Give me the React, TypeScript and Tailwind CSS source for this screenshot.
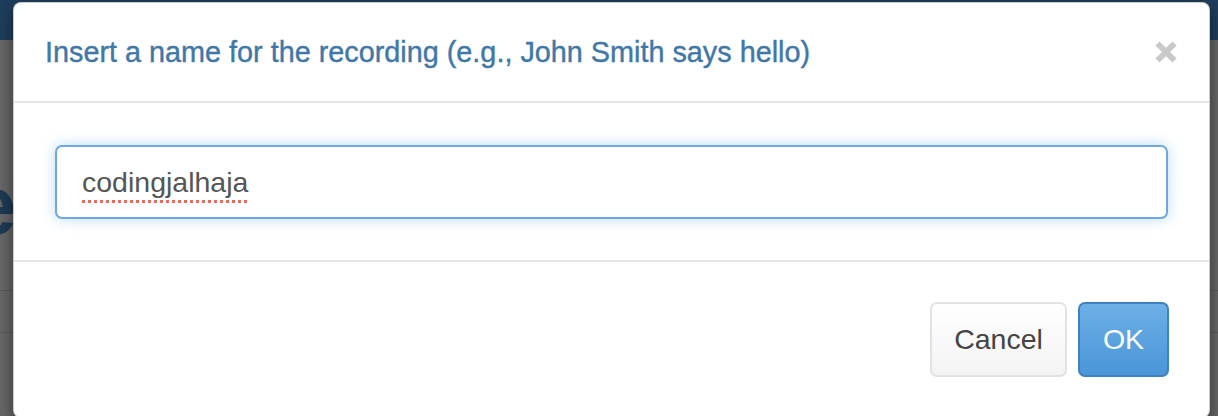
import React from "react";
import { X } from "lucide-react";

const App = () => {
  return (
    <div className="relative h-[416px] w-[1218px] overflow-hidden bg-[#666666] font-['Liberation_Sans',Arial,sans-serif]">
      {/* dimmed page behind the modal */}
      <div className="h-[40px] bg-[#1f3e5c]" />
      <div className="pt-[123px]">
        <h1 className="-ml-[30px] text-[84px] font-bold leading-[84px] text-[#1d3a56]">e</h1>
      </div>
      <div className="h-[44px] border-b border-[#595959]" />
      <div className="h-[42px] border-b border-[#595959]" />

      <div className="absolute left-[13px] top-[2px] w-[1197px] rounded-[8px] border border-black/20 bg-white shadow-[0_5px_15px_rgba(0,0,0,0.5)]">
        <div className="flex h-[100px] items-center justify-between border-b-2 border-[#e5e5e5] pl-[31px] pr-[26px]">
          <h4 className="mt-[2px] text-[28.8px] font-normal text-[#3f78a8] [-webkit-text-stroke:0.4px_#3f78a8]">
            Insert a name for the recording (e.g., John Smith says hello)
          </h4>
          <button className="text-[#c9c9c9]">
            <X size={34} strokeWidth={4.2} strokeLinecap="butt" />
          </button>
        </div>
        <div className="px-[41px] pb-[41px] pt-[42px]">
          <div className="flex h-[74px] items-center rounded-[7px] border-2 border-[#6ea8e3] bg-white pl-[25px] shadow-[0_0_14px_rgba(102,175,233,0.45)]">
            <span className="text-[28.5px] text-[#555555] underline decoration-[#e86a5c] decoration-dotted decoration-[3px] underline-offset-[8px]">
              codingjalhaja
            </span>
          </div>
        </div>
        <div className="flex justify-end gap-[11px] border-t-2 border-[#e5e5e5] pb-[40px] pr-[40px] pt-[40px]">
          <button className="h-[75px] w-[137px] rounded-[7px] border-2 border-[#e2e2e2] bg-gradient-to-b from-white to-[#f3f3f3] text-[28.5px] text-[#444444]">
            Cancel
          </button>
          <button className="h-[75px] w-[91px] rounded-[7px] border-2 border-[#3f82c4] bg-gradient-to-b from-[#6cb0e6] to-[#4a95d9] text-[28.5px] text-white">
            OK
          </button>
        </div>
      </div>
    </div>
  );
};

export default App;
